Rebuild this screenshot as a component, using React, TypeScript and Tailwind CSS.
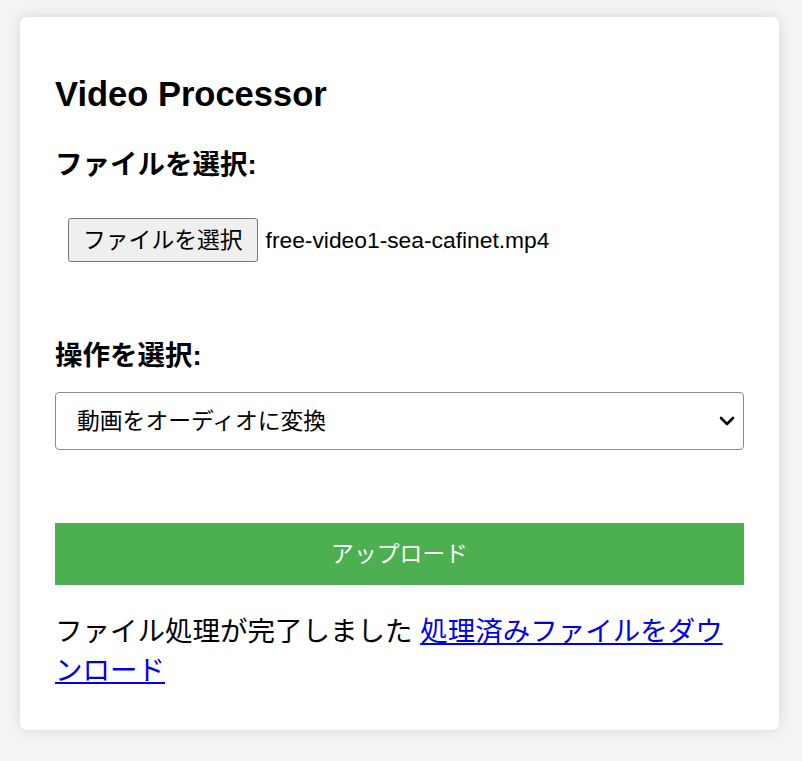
import React from 'react';

const FONT = '"Liberation Sans", "Noto Sans CJK JP", sans-serif';

export default function App() {
  return (
    <div className="min-h-screen bg-[#f4f4f4] pt-[17px] pl-[20px] pb-[31px]" style={{ fontFamily: FONT }}>
      <div className="w-[759px] bg-white rounded-[7px] shadow-[0_0_14px_rgba(0,0,0,0.12)] px-[35px] pt-[57px] pb-[40px] text-black">
        <h1 className="text-[34.5px] leading-[40px] font-bold">Video Processor</h1>

        <div className="mt-[31px] text-[27.5px] leading-[40px] font-bold">ファイルを選択:</div>

        <div className="mt-[33px] flex items-center pl-[13px]">
          <button className="h-[44px] px-[14px] bg-[#efefef] border border-[#767676] rounded-[3px] text-[22.8px] leading-none text-black">
            ファイルを選択
          </button>
          <span className="ml-[8px] text-[22.8px]">free-video1-sea-cafinet.mp4</span>
        </div>

        <div className="mt-[74px] text-[27.5px] leading-[40px] font-bold">操作を選択:</div>

        <div className="mt-[16px] h-[58px] border border-[#8a8a8a] rounded-[4px] flex items-center justify-between pl-[21px] pr-[8px]">
          <span className="text-[22.8px]">動画をオーディオに変換</span>
          <svg width="16" height="10" viewBox="0 0 16 10" fill="none">
            <path d="M2 2l6 6 6-6" stroke="#000" strokeWidth="2.6" strokeLinecap="round" strokeLinejoin="round" />
          </svg>
        </div>

        <button className="mt-[73px] w-full h-[62px] bg-[#4caf50] text-white text-[22.8px] flex items-center justify-center">
          アップロード
        </button>

        <p className="mt-[27px] text-[27.5px] leading-[39px]">
          ファイル処理が完了しました{' '}
          <a href="#" className="text-[#0000ee] underline">処理済みファイルをダウンロード</a>
        </p>
      </div>
    </div>
  );
}
